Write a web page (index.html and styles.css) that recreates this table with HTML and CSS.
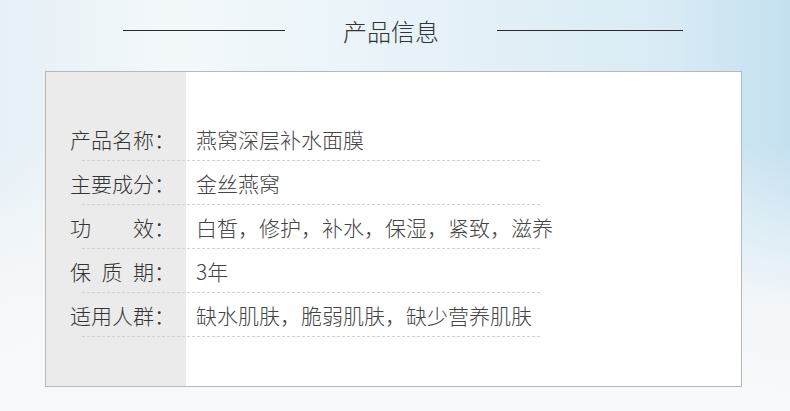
FILE: index.html
```html
<!DOCTYPE html>
<html lang="zh-CN">
<head>
    <meta charset="UTF-8">
    <meta name="viewport" content="width=device-width, initial-scale=1.0">
    <title>产品信息</title>
    <link rel="stylesheet" href="styles.css">
</head>
<body>
    <div class="page">
        <div class="heading">
            <span class="rule rule-left"></span>
            <h1>产品信息</h1>
            <span class="rule rule-right"></span>
        </div>

        <div class="info-box">
            <div class="row">
                <span class="label"><span class="name">产品名称</span>：</span>
                <span class="value">燕窝深层补水面膜</span>
            </div>
            <div class="row">
                <span class="label"><span class="name">主要成分</span>：</span>
                <span class="value">金丝燕窝</span>
            </div>
            <div class="row">
                <span class="label"><span class="name">功效</span>：</span>
                <span class="value">白皙，修护，补水，保湿，紧致，滋养</span>
            </div>
            <div class="row">
                <span class="label"><span class="name">保质期</span>：</span>
                <span class="value">3年</span>
            </div>
            <div class="row">
                <span class="label"><span class="name">适用人群</span>：</span>
                <span class="value">缺水肌肤，脆弱肌肤，缺少营养肌肤</span>
            </div>
        </div>
    </div>
</body>
</html>
```

FILE: styles.css
```css
body {
    margin: 0;
    padding: 0;
    font-family: "Noto Sans CJK SC", "Noto Sans", sans-serif;
    color: #333;
}
.page {
    width: 790px;
    height: 411px;
    overflow: hidden;
    background:
        linear-gradient(to bottom, rgba(248, 249, 251, 0) 0%, rgba(248, 249, 251, 0) 35%, rgba(248, 249, 251, 0.9) 75%, #f8f9fb 100%),
        linear-gradient(to right, #e6f0f6 0%, #f3f8fb 22%, #eaf4f9 45%, #e2eff7 65%, #d8ebf5 85%, #c4e0ef 100%);
}
.heading {
    display: flex;
    align-items: center;
    gap: 58px;
    height: 62px;
    padding-left: 123px;
    margin-bottom: 9px;
}
.heading h1 {
    margin: 0;
    font-size: 24px;
    font-weight: 300;
    line-height: 1;
    color: #333;
}
.rule {
    height: 1px;
    background: #2a2a2a;
    margin-top: -1px;
}
.rule-left {
    width: 162px;
}
.rule-right {
    width: 186px;
}
.info-box {
    box-sizing: border-box;
    width: 697px;
    height: 316px;
    margin-left: 45px;
    padding-top: 45px;
    padding-left: 36px;
    border: 1px solid #b8b8b8;
    background: linear-gradient(to right, #ebebeb 140px, #fff 140px);
}
.row {
    box-sizing: border-box;
    display: flex;
    align-items: center;
    width: 458px;
    height: 44px;
    border-bottom: 1px dashed #d2d2d2;
    font-size: 21px;
    font-weight: 300;
    white-space: nowrap;
}
.label {
    display: flex;
    flex-shrink: 0;
    width: 126px;
    margin-left: -12px;
    color: #333;
}
.name {
    width: 84px;
    text-align: justify;
    text-align-last: justify;
}
.value {
    flex-shrink: 0;
    color: #444;
}
```
